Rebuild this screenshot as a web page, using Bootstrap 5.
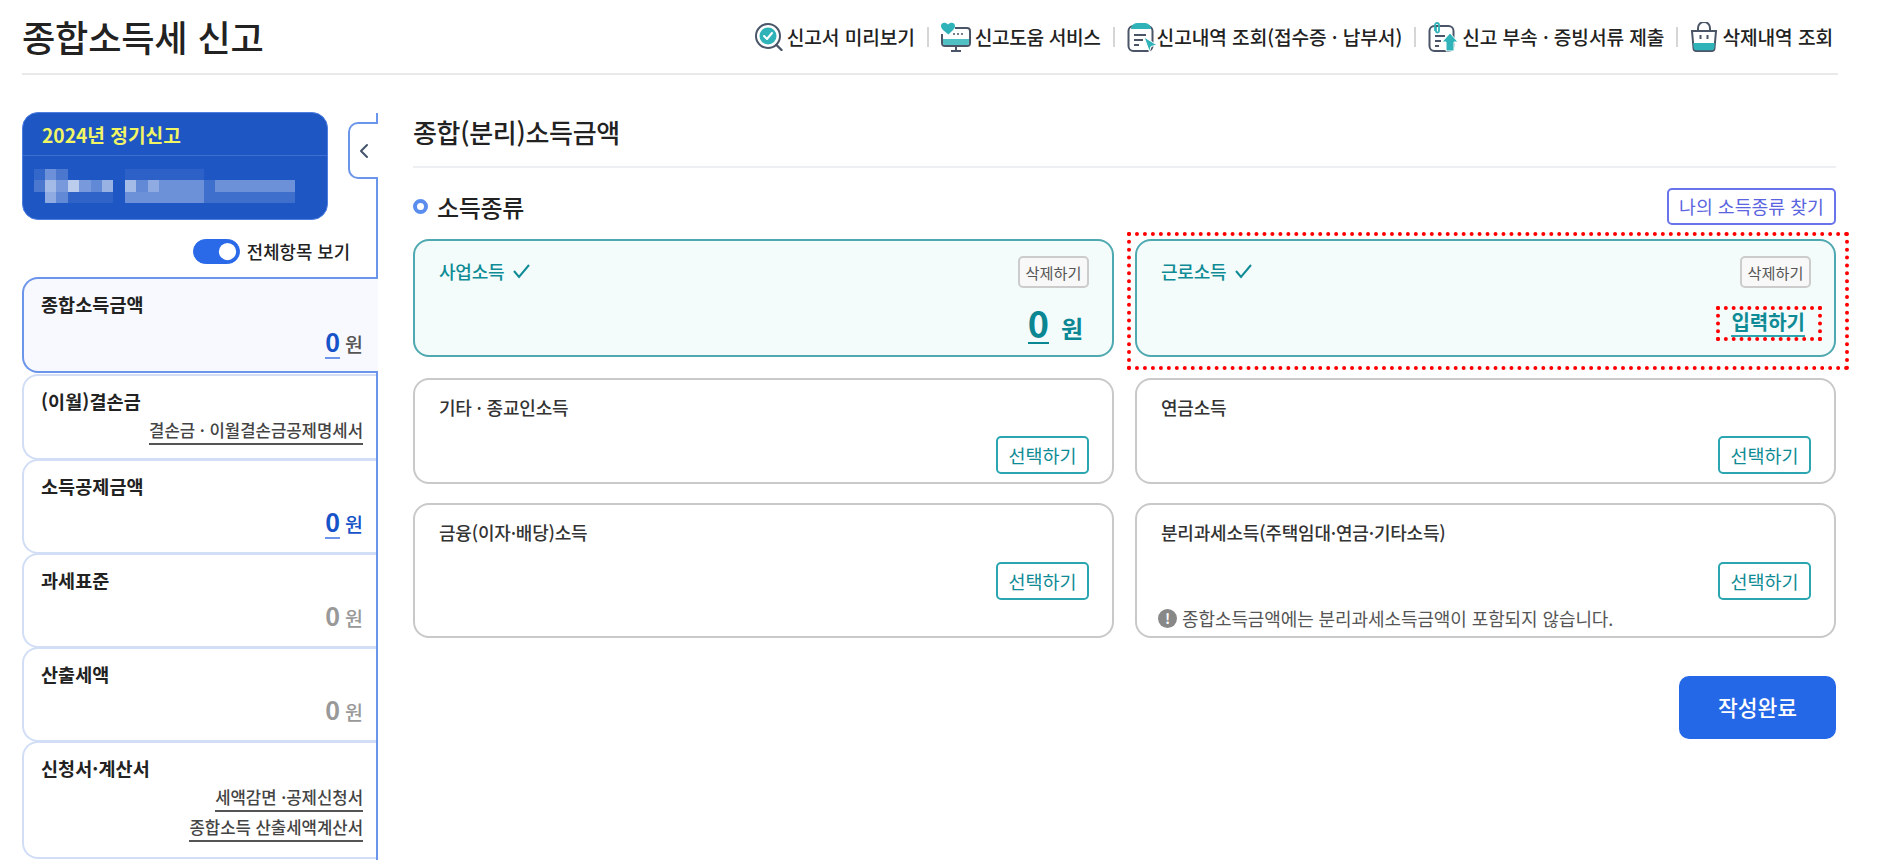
<!doctype html>
<html lang="ko"><head><meta charset="utf-8"><title>종합소득세 신고</title>
<link href="https://cdn.jsdelivr.net/npm/bootstrap@5.3.0/dist/css/bootstrap.min.css" rel="stylesheet">
<style>
html,body{height:860px;overflow:hidden}
body{font-family:"Noto Sans CJK KR","Noto Sans",sans-serif;color:#222;background:#fff;padding:0 52px 0 22px}
.top-bar{height:75px;border-bottom:2px solid #e9e9e9;margin-right:-2px}
.page-title{font-size:36.200px;font-weight:500;line-height:1;margin:0;color:#222;letter-spacing:-.2px}
.top-nav{margin-right:5px}
.top-link{font-size:19.200px;font-weight:500;color:#222;line-height:28px;letter-spacing:-.1px;white-space:nowrap;text-decoration:none}
.top-link.tight{letter-spacing:-.4px}
.top-link svg{flex:none}
.top-sep{width:2px;height:20px;background:#d6d6d6;margin:0 12px}
.side-col{width:356px;flex:none;border-right:2px solid #6b95ea;height:748px;margin-top:1px}
.year-box{width:306px;height:108px;background:#1e56c4;border-radius:16px;margin-top:-1px;overflow:hidden;border:1px solid #4d7ee0}
.year-title{height:43px;padding:9px 0 0 19px;font-size:19.200px;font-weight:700;line-height:26px;color:#f1f564;border-bottom:1px solid #3f6fd0}
.mosaic{display:block;margin:13px 0 0 11px}
.fold-tab{width:30px;height:57px;margin:9px -2px 0 0;background:#fff;border:2px solid #6b95ea;border-right:0;border-radius:10px 0 0 10px;color:#44546a;padding:0}
.view-row{margin-top:19px;margin-right:26px;height:25px}
.view-row .form-check-input{width:47px;height:25px;margin:0;background-color:#2a6ae8;border-color:#2a6ae8;float:none}
.view-row .form-switch{padding:0;margin:0;min-height:0;display:flex}
.view-label{font-size:17.800px;font-weight:500;margin-left:7px;line-height:25px;color:#222}
.step-list{margin-top:13px}
.step{border:2px solid #d1def6;border-right:0;border-radius:16px 0 0 16px;padding:11px 13px 0 17px;background:#fff;margin-bottom:-1px}
.step.on{border-color:#6b95ea;background:#f8f9ff;margin-right:-2px;padding-right:15px;margin-bottom:1px}
.h95{height:96px}.h86{height:86px}.h94{height:95px}.h118{height:118px}
.step-name{font-size:18.500px;font-weight:700;line-height:28px;color:#222;letter-spacing:.1px}
.step-val{text-align:right;line-height:34px;margin-top:5px;height:34px}
.step.on .step-val{margin-top:7px}
.num-blue,.num-grey{display:inline-block;font-size:25px;font-weight:700;line-height:32px;border-bottom:2px solid #6b95ea;color:#1653c8}
.num-grey{color:#999;border-bottom-color:transparent}
.won-blue,.won-grey{font-size:19.500px;font-weight:500;color:#1653c8;margin-left:5px}
.won-grey{color:#999}
.won-dark{color:#555}
.step-link{text-align:right;font-size:16.700px;font-weight:500;color:#444;line-height:26px;height:30px}
.step-link span{border-bottom:2px solid #555;padding-bottom:1px;display:inline-block;line-height:24px}
.step-link.first{margin-top:2px}
.main-col{flex:1;margin-left:35px;min-width:0}
.main-head{height:56px;border-bottom:2px solid #eeeff2;font-size:26px;font-weight:500;line-height:40px;color:#222;letter-spacing:-.3px;margin:0;padding-bottom:14px}
.sec-row{margin-top:20px;height:37px}
.sec-ring{width:15px;height:15px;border:4px solid #5b8def;border-radius:50%;margin-right:9px}
.sec-name{font-size:24px;font-weight:500;line-height:30px;color:#222;margin:0;letter-spacing:-.3px}
.find-btn{height:37px;width:169px;padding:0;border:2px solid #6a74ea;border-radius:5px;color:#5a64e0;font-size:18.300px;background:#fff;line-height:33px}
.tile-grid{--bs-gutter-x:21px;margin-top:14px}
.tile{border:2px solid #c9c9c9;border-radius:16px;padding:15px 23px 0 24px;background:#fff;position:relative}
.tile.done{border-color:#4fa9b0;background:#f4fbfb}
.t118{height:118px;margin-bottom:21px}.t106{height:106px;margin-bottom:19px}.t135{height:135px}
.tile-name{font-size:18px;font-weight:500;line-height:24px;color:#333;letter-spacing:-.2px}
.done .tile-name{color:#0e8b95;margin-top:-2px}
.del-btn{height:32px;width:71px;padding:0;border:2px solid #ccc;border-radius:5px;background:#f8f8f8;color:#555;font-size:15.200px;line-height:28px}
.pick-btn{display:block;margin:17px 0 0 auto;height:38px;width:93px;padding:0;border:2px solid #2ba5b0;border-radius:5px;background:#fff;color:#0e8b95;font-size:18.500px;line-height:34px}
.t135 .pick-btn{margin-top:18px}
.big-num{display:inline-block;font-size:36px;font-weight:700;line-height:40px;color:#0a8793;border-bottom:2px solid #0a8793}
.big-won{font-size:24px;font-weight:600;color:#0a8793;margin:0 6px 0 12px}
.amt-row{margin-top:14px;text-align:right;height:42px}
.enter-row{margin-top:21px;text-align:right}
.enter-link{position:relative;display:inline-block;margin-right:6px;font-size:20px;font-weight:600;line-height:26px;color:#0e8b95;border-bottom:2px solid #2ba5b0}
.enter-link::after{content:"";position:absolute;left:-15px;right:-17px;top:-3px;bottom:-6px;border:4px dotted #f00;pointer-events:none}
.focus-tile::after{content:"";position:absolute;left:-10px;right:-15px;top:-9px;bottom:-15px;border:4px dotted #f00;pointer-events:none}
.tile-note{margin:5px 0 0 -3px;font-size:18px;line-height:26px;color:#555;letter-spacing:-.1px}
.note-dot{width:19px;height:19px;border-radius:50%;background:#888;color:#fff;font-size:14px;font-weight:700;line-height:19px;text-align:center;margin-right:5px;flex:none}
.done-btn{width:157px;height:63px;border:0;border-radius:10px;background:#2468e8;color:#fff;font-size:21.500px;font-weight:500;margin-top:38px;padding:0}
</style></head><body>

<header class="top-bar d-flex align-items-center justify-content-between">
  <h1 class="page-title">종합소득세 신고</h1>
  <nav class="top-nav d-flex align-items-center">
    <a class="top-link d-flex align-items-center" href="#"><svg width="28" height="28" viewBox="0 0 28 28" class="me-1"><circle cx="13" cy="13" r="12" fill="none" stroke="#4a5568" stroke-width="2"/><circle cx="13" cy="13" r="8.500" fill="#2fb3b8"/><path d="M9 13l3 3 5-6" fill="none" stroke="#fff" stroke-width="2" stroke-linecap="round" stroke-linejoin="round"/><path d="M21.500 22l5 5" stroke="#4a5568" stroke-width="2.400" stroke-linecap="round"/></svg>신고서 미리보기</a>
    <span class="top-sep"></span>
    <a class="top-link tight d-flex align-items-center" href="#"><svg width="30" height="30" viewBox="0 0 30 30" class="me-1"><path d="M14 6h12a3 3 0 0 1 3 3v12a3 3 0 0 1-3 3H4a3 3 0 0 1-3-3V12" fill="none" stroke="#4a5568" stroke-width="2"/><path d="M2 17h26v4a2 2 0 0 1-2 2H4a2 2 0 0 1-2-2z" fill="#4fc0c4"/><path d="M7.500 12.500C3 9 0 7 0 4c0-3 4-4.500 7-1.500 3-3 7-1.500 7 1.500 0 3-3 5-6.500 8.500z" fill="#2fb3b8"/><circle cx="13" cy="12" r="1" fill="#4a5568"/><circle cx="17" cy="12" r="1" fill="#4a5568"/><circle cx="21" cy="12" r="1" fill="#4a5568"/><path d="M15 24v4M10 29h10" stroke="#4a5568" stroke-width="2"/></svg>신고도움 서비스</a>
    <span class="top-sep"></span>
    <a class="top-link d-flex align-items-center" href="#"><svg width="30" height="30" viewBox="0 0 30 30"><rect x="1.500" y="4" width="24" height="25" rx="5" fill="none" stroke="#4a5568" stroke-width="2"/><path d="M4 7a6 6 0 0 1 6-6h8a6 6 0 0 1 6 6z" fill="#2fb3b8"/><path d="M7 13h12M7 18h9M7 23h5" stroke="#4a5568" stroke-width="1.800"/><path d="M17 15l13 8-6 1.500-1.500 5.500z" fill="#2fb3b8" stroke="#fff"/></svg>신고내역 조회(접수증 · 납부서)</a>
    <span class="top-sep"></span>
    <a class="top-link d-flex align-items-center" href="#"><svg width="30" height="30" viewBox="0 0 30 30" class="me-1"><rect x="1.500" y="4" width="24" height="25" rx="5" fill="none" stroke="#4a5568" stroke-width="2"/><path d="M7 9V3a2 2 0 0 1 4 0v6a1.500 1.500 0 0 1-3 0V5" fill="none" stroke="#2fb3b8" stroke-width="1.800"/><path d="M7 14h10M7 19h6M7 24h4" stroke="#4a5568" stroke-width="1.800"/><path d="M22 11l8 9h-4v9h-8v-9h-4z" fill="#2fb3b8" stroke="#fff"/></svg>신고 부속 · 증빙서류 제출</a>
    <span class="top-sep"></span>
    <a class="top-link d-flex align-items-center" href="#"><svg width="28" height="30" viewBox="0 0 28 30" class="me-1"><path d="M8 9V6a6 6 0 0 1 12 0v3" fill="none" stroke="#4a5568" stroke-width="2"/><path d="M2 9h24l-1.500 17a3 3 0 0 1-3 3h-15a3 3 0 0 1-3-3z" fill="none" stroke="#4a5568" stroke-width="2"/><path d="M3.200 21h21.600l-.5 5a2.500 2.500 0 0 1-2.500 2.200H6.200a2.500 2.500 0 0 1-2.500-2.200z" fill="#2fb3b8"/><path d="M10.500 13v4M17.500 13v4" stroke="#4a5568" stroke-width="2"/></svg>삭제내역 조회</a>
  </nav>
</header>

<div class="d-flex" style="margin-top:37px">
  <aside class="side-col">
    <div class="d-flex justify-content-between align-items-start">
      <div class="year-box">
        <div class="year-title">2024년 정기신고</div>
        <svg class="mosaic" width="270" height="36" viewBox="0 0 270 36" aria-hidden="true" fill="#fff">
          <rect x="0" y="0" width="11" height="11" opacity=".1"/><rect x="11" y="0" width="11" height="11" opacity=".35"/><rect x="22" y="0" width="12" height="11" opacity=".2"/><rect x="91" y="0" width="79" height="11" opacity=".07"/>
          <rect x="0" y="11" width="11" height="12" opacity=".2"/><rect x="11" y="11" width="11" height="12" opacity=".6"/><rect x="22" y="11" width="12" height="12" opacity=".4"/><rect x="34" y="11" width="11" height="12" opacity=".7"/><rect x="45" y="11" width="12" height="12" opacity=".4"/><rect x="57" y="11" width="11" height="12" opacity=".3"/><rect x="68" y="11" width="11" height="12" opacity=".55"/>
          <rect x="91" y="11" width="11" height="12" opacity=".6"/><rect x="102" y="11" width="12" height="12" opacity=".3"/><rect x="114" y="11" width="11" height="12" opacity=".5"/><rect x="125" y="11" width="45" height="12" opacity=".35"/><rect x="170" y="11" width="11" height="12" opacity=".15"/><rect x="181" y="11" width="80" height="12" opacity=".35"/>
          <rect x="11" y="23" width="11" height="11" opacity=".5"/><rect x="22" y="23" width="12" height="11" opacity=".3"/><rect x="34" y="23" width="45" height="11" opacity=".08"/><rect x="91" y="23" width="79" height="11" opacity=".35"/><rect x="170" y="23" width="91" height="11" opacity=".15"/>
        </svg>
      </div>
      <button class="fold-tab d-flex align-items-center justify-content-center" type="button" aria-label="접기"><svg width="12" height="16" viewBox="0 0 12 16"><path d="M9 2L3 8l6 6" fill="none" stroke="#44546a" stroke-width="2" stroke-linecap="round" stroke-linejoin="round"/></svg></button>
    </div>
    <div class="view-row d-flex justify-content-end align-items-center">
      <div class="form-check form-switch"><input class="form-check-input" type="checkbox" role="switch" id="viewAll" checked></div>
      <label class="view-label" for="viewAll">전체항목 보기</label>
    </div>
    <div class="step-list">
      <div class="step on h95"><div class="step-name">종합소득금액</div><div class="step-val"><span class="num-blue">0</span><span class="won-blue won-dark">원</span></div></div>
      <div class="step h86"><div class="step-name">(이월)결손금</div><div class="step-link first"><span>결손금 · 이월결손금공제명세서</span></div></div>
      <div class="step h94"><div class="step-name">소득공제금액</div><div class="step-val"><span class="num-blue">0</span><span class="won-blue">원</span></div></div>
      <div class="step h94"><div class="step-name">과세표준</div><div class="step-val"><span class="num-grey">0</span><span class="won-grey">원</span></div></div>
      <div class="step h94"><div class="step-name">산출세액</div><div class="step-val"><span class="num-grey">0</span><span class="won-grey">원</span></div></div>
      <div class="step h118"><div class="step-name">신청서·계산서</div><div class="step-link first"><span>세액감면 ·공제신청서</span></div><div class="step-link"><span>종합소득 산출세액계산서</span></div></div>
    </div>
  </aside>

  <main class="main-col">
    <h2 class="main-head">종합(분리)소득금액</h2>
    <div class="sec-row d-flex align-items-center justify-content-between">
      <div class="d-flex align-items-center"><span class="sec-ring"></span><h3 class="sec-name">소득종류</h3></div>
      <button class="btn find-btn" type="button">나의 소득종류 찾기</button>
    </div>
    <div class="row tile-grid">
      <div class="col-6"><div class="tile done t118">
        <div class="d-flex justify-content-between align-items-center"><div class="tile-name d-flex align-items-center">사업소득<svg class="ms-2" width="19" height="16" viewBox="0 0 19 16"><path d="M2 8l5 6L17 2" fill="none" stroke="#0e8b95" stroke-width="2"/></svg></div><button class="btn del-btn" type="button">삭제하기</button></div>
        <div class="amt-row"><span class="big-num">0</span><span class="big-won">원</span></div>
      </div></div>
      <div class="col-6"><div class="tile done t118 focus-tile">
        <div class="d-flex justify-content-between align-items-center"><div class="tile-name d-flex align-items-center">근로소득<svg class="ms-2" width="19" height="16" viewBox="0 0 19 16"><path d="M2 8l5 6L17 2" fill="none" stroke="#0e8b95" stroke-width="2"/></svg></div><button class="btn del-btn" type="button">삭제하기</button></div>
        <div class="enter-row"><span class="enter-link">입력하기</span></div>
      </div></div>
      <div class="col-6"><div class="tile t106"><div class="tile-name">기타 · 종교인소득</div><button class="btn pick-btn" type="button">선택하기</button></div></div>
      <div class="col-6"><div class="tile t106"><div class="tile-name">연금소득</div><button class="btn pick-btn" type="button">선택하기</button></div></div>
      <div class="col-6"><div class="tile t135"><div class="tile-name">금융(이자·배당)소득</div><button class="btn pick-btn" type="button">선택하기</button></div></div>
      <div class="col-6"><div class="tile t135"><div class="tile-name">분리과세소득(주택임대·연금·기타소득)</div><button class="btn pick-btn" type="button">선택하기</button><div class="tile-note d-flex align-items-center"><span class="note-dot">!</span>종합소득금액에는 분리과세소득금액이 포함되지 않습니다.</div></div></div>
    </div>
    <div class="d-flex justify-content-end"><button class="btn done-btn" type="button">작성완료</button></div>
  </main>
</div>
<script src="https://cdn.jsdelivr.net/npm/bootstrap@5.3.0/dist/js/bootstrap.bundle.min.js"></script>
</body></html>
